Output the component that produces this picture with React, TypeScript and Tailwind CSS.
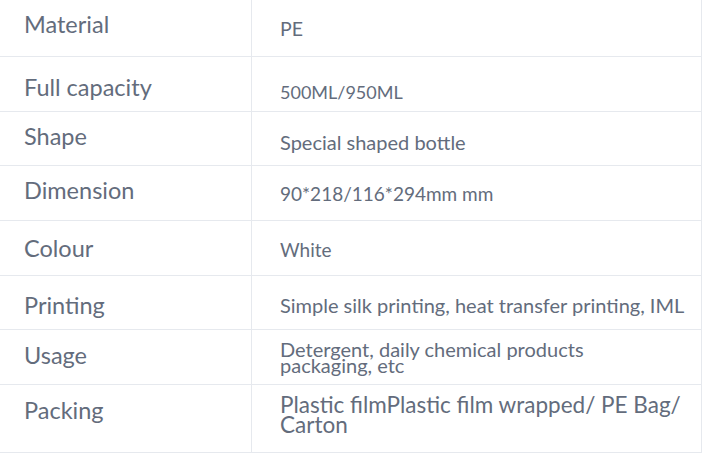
import React from "react";

type Row = {
  label: string;
  value: React.ReactNode;
  h: string;
  lp: string;
  vp: string;
  vc: string;
};

const rows: Row[] = [
  { label: "Material", value: "PE", h: "h-[57px]", lp: "pt-[13px]", vp: "pt-[19px]", vc: "text-[19.5px] leading-none" },
  { label: "Full capacity", value: "500ML/950ML", h: "h-[55px]", lp: "pt-[19px]", vp: "pt-[26px]", vc: "text-[18px] leading-none" },
  { label: "Shape", value: "Special shaped bottle", h: "h-[54px]", lp: "pt-[13px]", vp: "pt-[20px]", vc: "text-[20px] leading-none" },
  { label: "Dimension", value: "90*218/116*294mm mm", h: "h-[55px]", lp: "pt-[13px]", vp: "pt-[18px]", vc: "text-[19px] leading-none" },
  { label: "Colour", value: "White", h: "h-[55px]", lp: "pt-[16px]", vp: "pt-[19px]", vc: "text-[19px] leading-none" },
  { label: "Printing", value: "Simple silk printing, heat transfer printing, IML", h: "h-[54px]", lp: "pt-[18px]", vp: "pt-[19px]", vc: "text-[20px] leading-none" },
  { label: "Usage", value: "Detergent, daily chemical products packaging, etc", h: "h-[55px]", lp: "pt-[14px]", vp: "pt-[11px]", vc: "text-[20px] leading-[16px] max-w-[340px]" },
  { label: "Packing", value: "Plastic filmPlastic film wrapped/ PE Bag/ Carton", h: "h-[68px]", lp: "pt-[14px]", vp: "pt-[10px]", vc: "text-[22.5px] leading-[20px] max-w-[440px]" },
];

export default function App() {
  return (
    <div
      className="w-[702px] h-[453px] bg-white text-[#636c7c] border-r border-[#e6e9ee] overflow-hidden"
      style={{ fontFamily: "Lato, 'Open Sans', sans-serif" }}
    >
      {rows.map((r) => (
        <div key={r.label} className={`flex border-b border-[#e6e9ee] ${r.h}`}>
          <div className={`w-[251px] shrink-0 pl-[24px] text-[23.5px] leading-none ${r.lp}`}>{r.label}</div>
          <div className="flex-1 border-l border-[#e6e9ee] pl-[28px]">
            <div className={`${r.vp} ${r.vc}`}>{r.value}</div>
          </div>
        </div>
      ))}
    </div>
  );
}
